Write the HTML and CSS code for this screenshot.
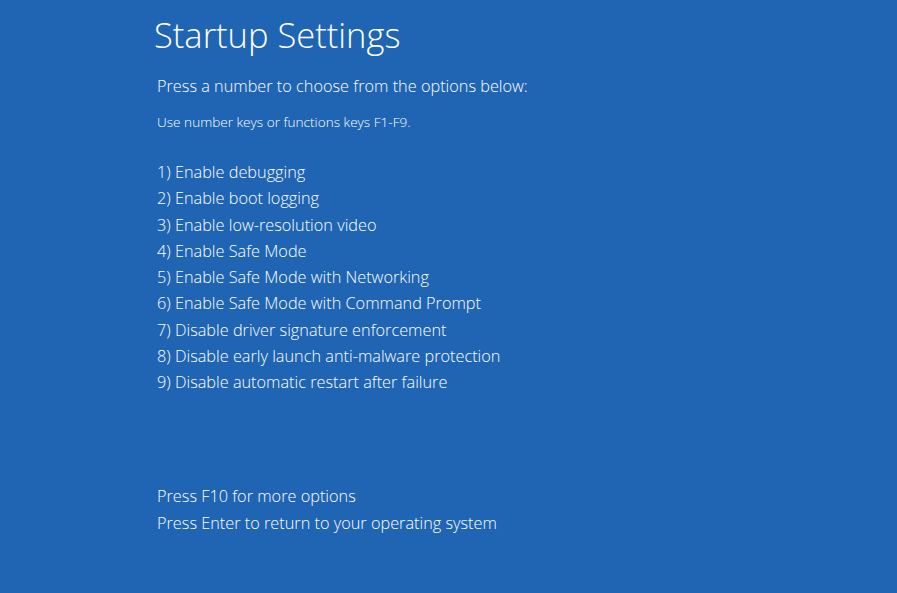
FILE: index.html
```html
<!DOCTYPE html>
<html>
<head>
    <link rel="stylesheet" href="styles.css">
</head>
<body>
<div class="screen">
    <h1 class="title">Startup Settings</h1>
    <p class="lead">Press a number to choose from the options below:</p>
    <p class="hint">Use number keys or functions keys F1-F9.</p>
    <ul class="options">
        <li>1) Enable debugging</li>
        <li>2) Enable boot logging</li>
        <li>3) Enable low-resolution video</li>
        <li>4) Enable Safe Mode</li>
        <li>5) Enable Safe Mode with Networking</li>
        <li>6) Enable Safe Mode with Command Prompt</li>
        <li>7) Disable driver signature enforcement</li>
        <li>8) Disable early launch anti-malware protection</li>
        <li>9) Disable automatic restart after failure</li>
    </ul>
    <ul class="footer">
        <li>Press F10 for more options</li>
        <li>Press Enter to return to your operating system</li>
    </ul>
</div>
</body>
</html>
```
FILE: styles.css
```css
*{
    font-family:'Open Sans', 'Noto Sans', sans-serif;
}
html,body{
    margin:0;
    height:100%;
    background-color:#1f65b3;
}
.screen{
    display:flex;
    flex-direction:column;
    padding:15px 0 0 157px;
    color:#ffffff;
}
.title{
    margin:0 0 0 -3px;
    font-size:34.5px;
    font-weight:300;
    line-height:40px;
}
.lead{
    margin:19px 0 0 0;
    font-size:16.3px;
    font-weight:300;
    line-height:24px;
}
.hint{
    margin:15px 0 0 0;
    font-size:13.6px;
    font-weight:300;
    line-height:18px;
}
.options,.footer{
    list-style:none;
    margin:0;
    padding:0;
    font-size:16.3px;
    font-weight:300;
    line-height:26.25px;
}
.options{
    margin-top:28px;
}
.footer{
    margin-top:88px;
}
```
